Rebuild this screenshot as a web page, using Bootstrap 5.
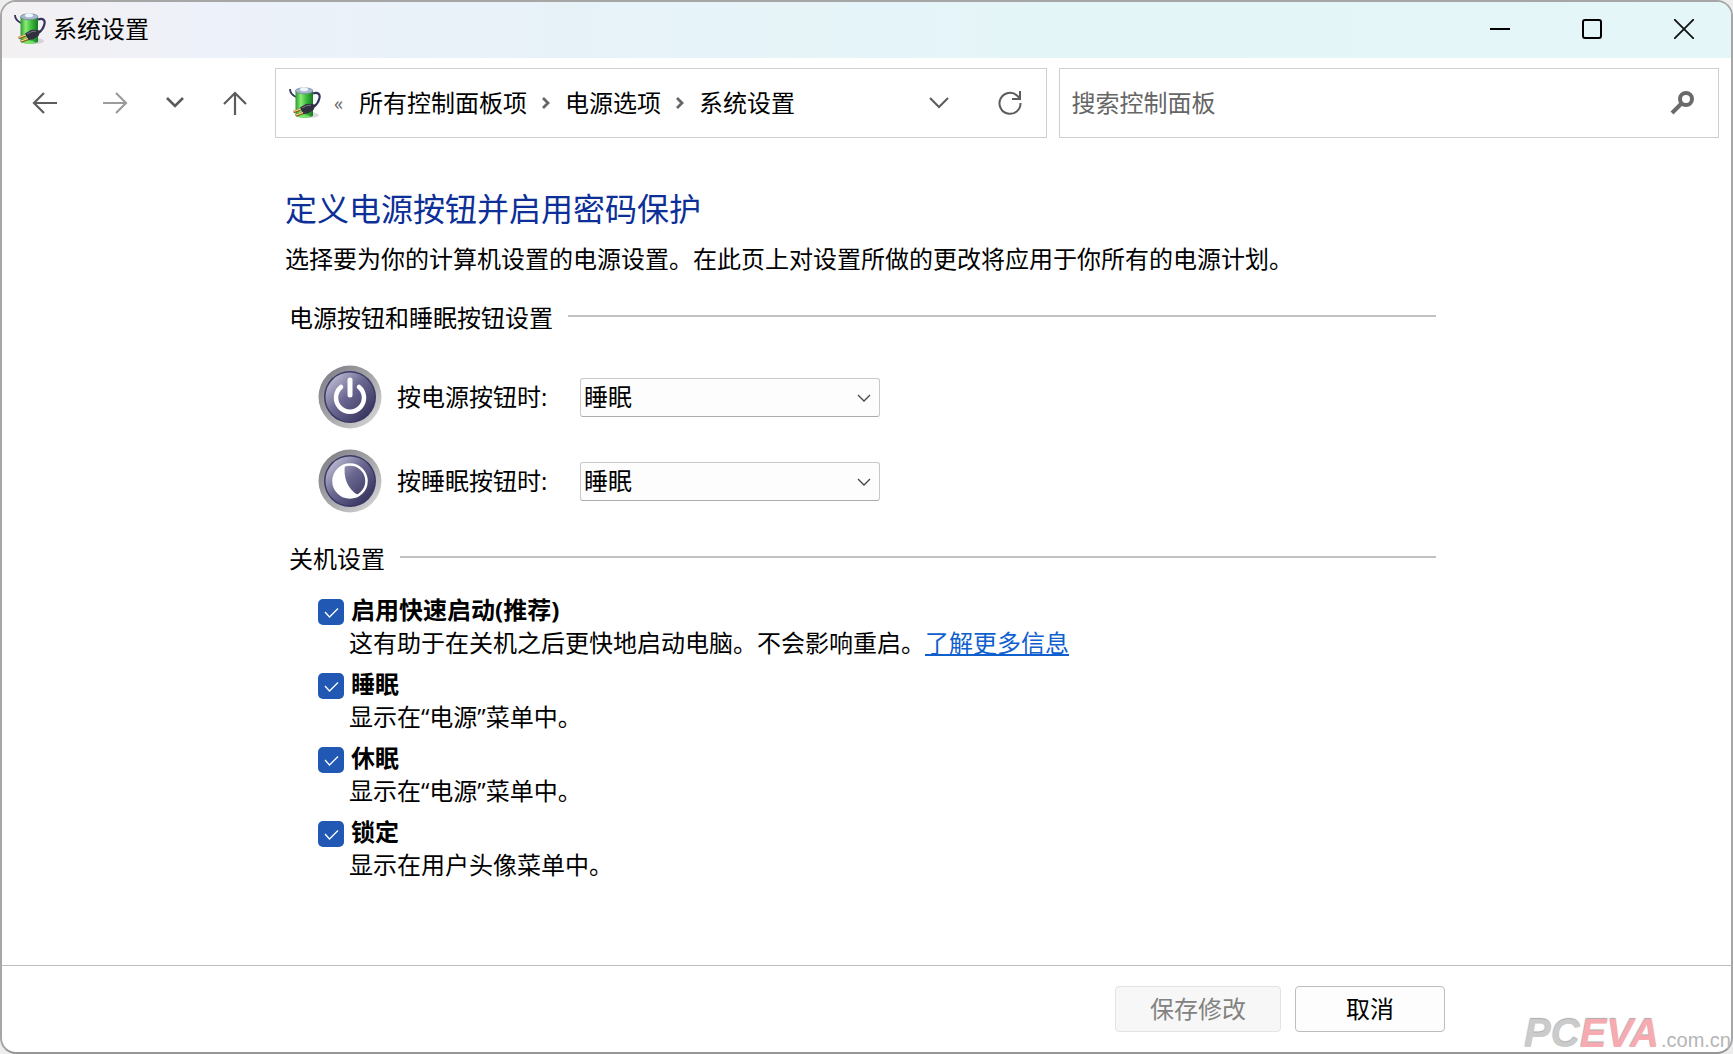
<!DOCTYPE html>
<html lang="zh-CN">
<head>
<meta charset="utf-8">
<meta name="viewport" content="width=device-width, initial-scale=1">
<title>系统设置</title>
<link href="https://cdn.jsdelivr.net/npm/bootstrap@5.3.0/dist/css/bootstrap.min.css" rel="stylesheet">
<style>
  body { background: #ededed; color: #000; font: 24px/32px "Open Sans", "Noto Sans CJK SC", sans-serif; }
  svg { display: block; flex: none; fill: none; }
  .win { min-height: 100vh; border: 2px solid #a6a6a6; border-bottom-color: #969696; border-radius: 16px; background: #fff; overflow: hidden; }
  .titlebar { height: 56px; padding: 0 1px 2px 12px; background: linear-gradient(90deg, #f3f0f2 0, #edf1f9 12%, #e8f2f8 28%, #e4f5f8 60%, #e4f6f7 100%); }
  .titlebar span { padding-left: 7px; }
  .caption-btn { width: 92px; height: 54px; }
  .plain-btn { border: 0; border-radius: 0; padding: 0; display: flex; align-items: center; justify-content: center; }
  .toolbar-row { padding: 10px 12px 0 15px; gap: 12px; }
  .nav-keys { gap: 4px; }
  .nav-keys .plain-btn { width: 56px; height: 40px; }
  .nav-keys .plain-btn:first-child { margin-right: 10px; }
  .box { height: 70px; border: 1px solid #cfcfcf; }
  .address { flex: 758 1 0; padding-left: 13px; }
  .search { flex: 626 1 0; padding: 0 21px 0 11px; }
  .crumbs a { color: #000; text-decoration: none; }
  .crumbs svg { margin: 0 12px; }
  .more { font-size: 18px; line-height: 28px; width: 38px; padding-left: 13px; color: #666; }
  .search input { font-size: 24px; line-height: 32px; color: #000; background: transparent; outline: 0; min-width: 0; }
  .search input::placeholder { color: #666; opacity: 1; }
  main { padding: 51px 295px 0 283px; }
  h1 { font-size: 32px; line-height: 40px; font-weight: 400; color: #0d2f98; margin: 0 0 14px; }
  h2 { font-size: 24px; line-height: 32px; font-weight: 400; margin: 0; }
  .intro { margin: 0 0 27px; }
  .shutdown { margin-top: 30px; }
  .section-head { padding-left: 4px; gap: 15px; }
  .rule { height: 2px; margin-bottom: 4px; background: #c2c2c2; }
  .fields { padding: 31px 0 0 33px; }
  .field-row { height: 64px; margin-bottom: 20px; gap: 15px; }
  .field-row label { width: 168px; }
  .pick { width: 300px; height: 39px; padding: 0 32px 0 3px; font-size: 24px; line-height: 32px; color: #000; background: #fdfdfd; border: 1px solid #c9c9c9; border-bottom-color: #adadad; border-radius: 3px; appearance: none; }
  .pick-icon { position: absolute; right: 9px; top: 16px; pointer-events: none; }
  .options { padding: 18px 0 0 33px; }
  .option { gap: 5px; margin-bottom: 8px; }
  .tick { position: relative; width: 26px; height: 26px; margin-top: 6px; }
  .tick input { appearance: none; display: block; width: 26px; height: 26px; margin: 0; border-radius: 5px; background: #2058b3; }
  .tick svg { position: absolute; left: 0; top: 0; pointer-events: none; }
  .option label { display: block; font-weight: 700; line-height: 33px; padding-left: 2px; }
  .option p { line-height: 33px; margin: 0; }
  .option a { color: #0f5fce; }
  footer { height: 87px; border-top: 1px solid #bdbdbd; padding: 20px 286px 0 0; gap: 14px; }
  .cmd { height: 46px; padding: 0; font-size: 24px; line-height: 32px; color: #000; background: #fdfdfd; border: 1px solid #bdbdbd; border-radius: 4px; }
  .cmd:disabled { color: #828282; background: #f7f7f7; border-color: #e3e3e3; opacity: 1; }
  .cmd-save { width: 166px; }
  .cmd-cancel { width: 150px; }
  .site { position: absolute; right: 0; bottom: 0; font-family: "Liberation Sans", sans-serif; line-height: 24px; color: #cbcbcb; }
  .site b { font-size: 40px; font-style: italic; text-shadow: 0 -1px 1px #a8a8a8; }
  .site b span { color: #f7aab0; }
  .site small { font-size: 20px; color: #b5b5b5; margin-left: 2px; }
</style>
</head>
<body>
<svg width="0" height="0" class="position-absolute" aria-hidden="true">
  <defs>
    <linearGradient id="cell" x1="0" x2="1"><stop offset="0" stop-color="#299a2e"/><stop offset=".3" stop-color="#8aec76"/><stop offset=".6" stop-color="#3fbf3f"/><stop offset="1" stop-color="#167a22"/></linearGradient>
    <linearGradient id="rim" x1="0" y1="0" x2="1" y2="1"><stop offset="0" stop-color="#77777f"/><stop offset=".5" stop-color="#a6a6aa"/><stop offset="1" stop-color="#dedede"/></linearGradient>
    <linearGradient id="face" x1="0" y1="0" x2="1" y2="1"><stop offset=".08" stop-color="#c3c2d8"/><stop offset=".45" stop-color="#6b6991"/><stop offset="1" stop-color="#2a2852"/></linearGradient>
    <symbol id="battery" viewBox="0 0 32 32">
      <ellipse cx="21" cy="28" rx="9" ry="3" fill="#999" opacity=".35"/>
      <path d="M1 2q0 5 6 8" stroke="#34345e" stroke-width="1.800"/>
      <path d="M24 6.500c5-2 8 1 6 6q-1 4-5 7" stroke="#34345e" stroke-width="2.200"/>
      <path d="M6.500 4v25q8.500 4 17.500 0V4z" fill="url(#cell)"/>
      <ellipse cx="15" cy="29.500" rx="6" ry="1.500" fill="#7be36c"/>
      <ellipse cx="15.200" cy="3.800" rx="8.800" ry="3" fill="#a9b9cd" stroke="#6b7e94" stroke-width=".7"/>
      <ellipse cx="15" cy="2.200" rx="4" ry="2" fill="#ecf6ff"/>
      <path d="M11 20.500l6-3.500q5-1 9.500 1l-2 5-5.500 3.500-5 .5z" fill="#30303f"/>
      <path d="M13 21l5-2.500 4-.3" stroke="#7d7d8c" stroke-width=".9"/>
      <path d="M11.500 22.500l-7 2.500M14 26l-7 2.500" stroke="#8a5c20" stroke-width="2.400"/>
      <path d="M11.500 22l-7 2.500M14 25.500l-7 2.500" stroke="#ffdf88" stroke-width="1.200"/>
    </symbol>
    <symbol id="knob" viewBox="0 0 64 64">
      <circle cx="32" cy="32" r="31.500" fill="url(#rim)"/>
      <circle cx="32" cy="32" r="26" fill="#3b3965"/>
      <circle cx="32" cy="32" r="24.500" fill="url(#face)"/>
    </symbol>
    <symbol id="crumb" viewBox="0 0 14 14"><path d="M4 2l5 5-5 5" stroke="#666" stroke-width="2.800"/></symbol>
    <symbol id="check" viewBox="0 0 26 26"><path d="M7 13l4.500 5L20 9.500" stroke="#fff" stroke-width="1.300"/></symbol>
    <symbol id="down" viewBox="0 0 14 8"><path d="M1 1l6 6 6-6" stroke="#444" stroke-width="1.300"/></symbol>
  </defs>
</svg>
<div class="win d-flex flex-column position-relative">
  <header class="titlebar d-flex align-items-center">
    <svg width="32" height="32"><use href="#battery"/></svg>
    <span class="me-auto">系统设置</span>
    <button class="btn plain-btn caption-btn" aria-label="最小化"><svg width="20" height="20" stroke="#000" stroke-width="2"><path d="M0 10h20"/></svg></button>
    <button class="btn plain-btn caption-btn" aria-label="最大化"><svg width="20" height="20" stroke="#000" stroke-width="2"><rect x="1" y="1" width="18" height="18" rx="2"/></svg></button>
    <button class="btn plain-btn caption-btn" aria-label="关闭"><svg width="20" height="20" stroke="#111" stroke-width="1.800"><path d="M0 0l20 20M20 0L0 20"/></svg></button>
  </header>

  <div class="toolbar-row d-flex align-items-center">
    <nav class="nav-keys d-flex flex-shrink-0 align-items-center" aria-label="导航">
      <button class="btn plain-btn" aria-label="后退"><svg width="28" height="24" stroke="#5c5c5c" stroke-width="2.200"><path d="M26 12H3M13 2L3 12l10 10"/></svg></button>
      <button class="btn plain-btn" aria-label="前进"><svg width="28" height="24" stroke="#9c9c9c" stroke-width="2.200"><path d="M2 12h23M15 2l10 10-10 10"/></svg></button>
      <button class="btn plain-btn" aria-label="最近的位置"><svg width="20" height="24" stroke="#5c5c5c" stroke-width="2.600"><path d="M2 7l8 8 8-8"/></svg></button>
      <button class="btn plain-btn" aria-label="向上"><svg width="24" height="24" stroke="#5c5c5c" stroke-width="2.200"><path d="M12 24V2M1 13L12 2l11 11"/></svg></button>
    </nav>
    <div class="box address d-flex align-items-center">
      <svg width="32" height="32"><use href="#battery"/></svg>
      <span class="more">«</span>
      <nav class="crumbs d-flex align-items-center me-auto text-nowrap" aria-label="路径">
        <a href="#">所有控制面板项</a><svg width="14" height="14"><use href="#crumb"/></svg>
        <a href="#">电源选项</a><svg width="14" height="14"><use href="#crumb"/></svg>
        <a href="#">系统设置</a>
      </nav>
      <button class="btn plain-btn me-5" aria-label="历史记录"><svg width="22" height="12" stroke="#5c5c5c" stroke-width="2"><path d="M2 1l9 9 9-9"/></svg></button>
      <button class="btn plain-btn me-4" aria-label="刷新"><svg width="24" height="24" stroke="#5c5c5c" stroke-width="2"><path d="M22.500 12A10.500 10.500 0 1 1 19 4.500l3 3M22 0v8h-8"/></svg></button>
    </div>
    <div class="box search d-flex align-items-center">
      <input class="border-0 p-0 flex-grow-1" type="search" aria-label="搜索控制面板" placeholder="搜索控制面板">
      <svg width="30" height="26" stroke="#6a6a6a" stroke-width="4"><circle cx="19" cy="9" r="6"/><path d="M15 13L5 23"/></svg>
    </div>
  </div>

  <main class="flex-grow-1">
    <h1>定义电源按钮并启用密码保护</h1>
    <p class="intro">选择要为你的计算机设置的电源设置。在此页上对设置所做的更改将应用于你所有的电源计划。</p>

    <section>
      <div class="section-head d-flex align-items-center"><h2>电源按钮和睡眠按钮设置</h2><div class="rule flex-grow-1"></div></div>
      <div class="fields">
        <div class="field-row d-flex align-items-center">
          <svg width="64" height="64"><use href="#knob"/><path d="M23 22a14 14 0 1 0 18 0" stroke="#fff" stroke-width="4.500" stroke-linecap="round"/><path d="M32 15v15" stroke="#fff" stroke-width="5" stroke-linecap="round"/></svg>
          <label for="power">按电源按钮时:</label>
          <div class="position-relative"><select class="pick" id="power"><option>睡眠</option></select><svg class="pick-icon" width="14" height="8"><use href="#down"/></svg></div>
        </div>
        <div class="field-row d-flex align-items-center">
          <svg width="64" height="64"><use href="#knob"/><circle cx="32" cy="32" r="16.500" stroke="#fff" stroke-width="2.500"/><path d="M27 16C25 27 29 40 40 46A16.500 16.500 0 1 1 27 16z" fill="#fff"/></svg>
          <label for="sleep">按睡眠按钮时:</label>
          <div class="position-relative"><select class="pick" id="sleep"><option>睡眠</option></select><svg class="pick-icon" width="14" height="8"><use href="#down"/></svg></div>
        </div>
      </div>
    </section>

    <section class="shutdown">
      <div class="section-head d-flex align-items-center"><h2>关机设置</h2><div class="rule flex-grow-1"></div></div>
      <div class="options">
        <div class="option d-flex">
          <div class="tick"><input type="checkbox" id="o1" checked><svg width="26" height="26"><use href="#check"/></svg></div>
          <div><label for="o1">启用快速启动(推荐)</label><p>这有助于在关机之后更快地启动电脑。不会影响重启。<a href="#">了解更多信息</a></p></div>
        </div>
        <div class="option d-flex">
          <div class="tick"><input type="checkbox" id="o2" checked><svg width="26" height="26"><use href="#check"/></svg></div>
          <div><label for="o2">睡眠</label><p>显示在“电源”菜单中。</p></div>
        </div>
        <div class="option d-flex">
          <div class="tick"><input type="checkbox" id="o3" checked><svg width="26" height="26"><use href="#check"/></svg></div>
          <div><label for="o3">休眠</label><p>显示在“电源”菜单中。</p></div>
        </div>
        <div class="option d-flex">
          <div class="tick"><input type="checkbox" id="o4" checked><svg width="26" height="26"><use href="#check"/></svg></div>
          <div><label for="o4">锁定</label><p>显示在用户头像菜单中。</p></div>
        </div>
      </div>
    </section>
  </main>

  <footer class="d-flex justify-content-end">
    <button class="btn cmd cmd-save" disabled>保存修改</button>
    <button class="btn cmd cmd-cancel">取消</button>
  </footer>
  <div class="site text-nowrap"><b>PC<span>EVA</span></b><small>.com.cn</small></div>
</div>
<script src="https://cdn.jsdelivr.net/npm/bootstrap@5.3.0/dist/js/bootstrap.bundle.min.js"></script>
</body>
</html>
